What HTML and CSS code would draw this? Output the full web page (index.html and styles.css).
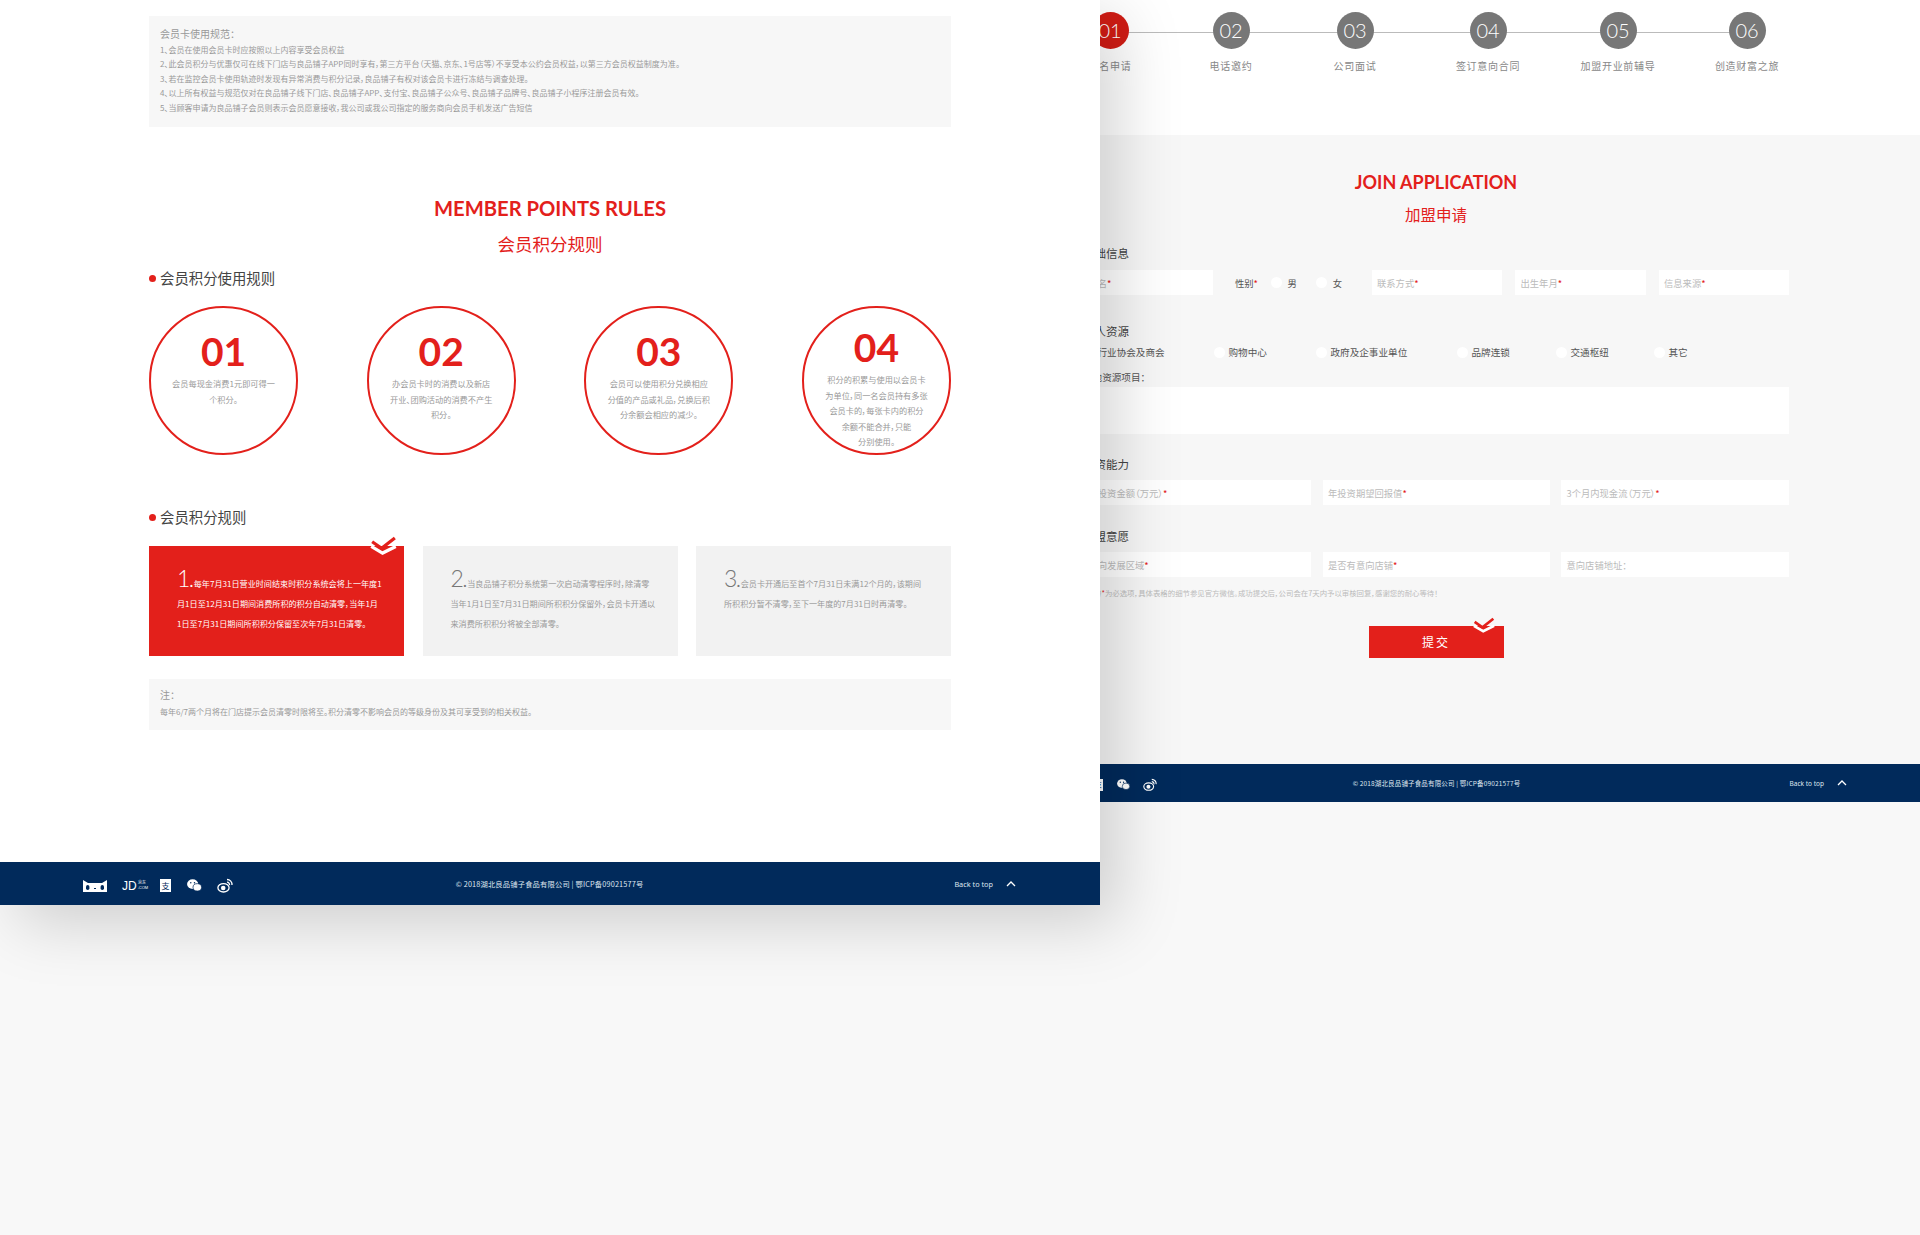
FILE: index.html
```html
<!DOCTYPE html>
<html lang="zh-CN">
<head>
<meta charset="utf-8">
<title>Member points rules and join application</title>
<link rel="stylesheet" href="styles.css">
</head>
<body>
<div class="canvas">

  <section class="win win-right">
    <div class="stepper">
      <div class="step step-on"><span class="step-dot">01</span><span class="step-label">报名申请</span></div>
      <div class="step"><span class="step-dot">02</span><span class="step-label">电话邀约</span></div>
      <div class="step"><span class="step-dot">03</span><span class="step-label">公司面试</span></div>
      <div class="step"><span class="step-dot">04</span><span class="step-label">签订意向合同</span></div>
      <div class="step"><span class="step-dot">05</span><span class="step-label">加盟开业前辅导</span></div>
      <div class="step"><span class="step-dot">06</span><span class="step-label">创造财富之旅</span></div>
    </div>
    <div class="apply">
      <h2 class="apply-en">JOIN APPLICATION</h2>
      <p class="apply-cn">加盟申请</p>
      <form class="form">
        <h3 class="form-h form-h1">基础信息</h3>
        <div class="row-basic">
          <div class="field f-name">姓名<i>*</i></div>
          <div class="gender">
            <span class="gender-label">性别<i>*</i></span>
            <span class="radio"></span><span class="gender-opt">男</span>
            <span class="radio radio-2"></span><span class="gender-opt">女</span>
          </div>
          <div class="field f-third">联系方式<i>*</i></div>
          <div class="field f-third">出生年月<i>*</i></div>
          <div class="field f-third">信息来源<i>*</i></div>
        </div>
        <h3 class="form-h form-h2">个人资源</h3>
        <div class="row-res">
          <div class="opt"><span class="radio"></span>行业协会及商会</div>
          <div class="opt"><span class="radio"></span>购物中心</div>
          <div class="opt"><span class="radio"></span>政府及企事业单位</div>
          <div class="opt"><span class="radio"></span>品牌连锁</div>
          <div class="opt"><span class="radio"></span>交通枢纽</div>
          <div class="opt"><span class="radio"></span>其它</div>
        </div>
        <div class="res-label">其他资源项目：</div>
        <div class="area"></div>
        <h3 class="form-h form-h3">投资能力</h3>
        <div class="row-three">
          <div class="field">年投资金额（万元）<i>*</i></div>
          <div class="field">年投资期望回报值<i>*</i></div>
          <div class="field">3个月内现金流（万元）<i>*</i></div>
        </div>
        <h3 class="form-h form-h4">加盟意愿</h3>
        <div class="row-three row-three-b">
          <div class="field">意向发展区域<i>*</i></div>
          <div class="field">是否有意向店铺<i>*</i></div>
          <div class="field">意向店铺地址：</div>
        </div>
        <p class="form-note">注：带<i>*</i>为必选项，具体表格的细节参见官方微信。成功提交后，公司会在7天内予以审核回复，感谢您的耐心等待！</p>
        <div class="submit">提交
          <svg class="tick tick-btn" viewBox="0 0 28 18"><polyline class="tick-w" points="1,10 13,17 27,10"/><polyline class="tick-r" points="2,5 12,12 26,1"/></svg>
        </div>
      </form>
    </div>
    <footer class="foot foot-r">
      <div class="foot-icons">
        <svg class="ic ic-tm" viewBox="0 0 24 12"><path class="ic-f" d="M0 0l5 3h14l5-3v12H0z"/><rect class="ic-b" x="3" y="5" width="3.4" height="5" rx="1.7"/><rect class="ic-b" x="17.6" y="5" width="3.4" height="5" rx="1.7"/></svg>
        <span class="ic-jd">JD<small>京东<br>.COM</small></span>
        <span class="ic-ali">支</span>
        <svg class="ic ic-wx" viewBox="0 0 16 14"><ellipse class="ic-f" cx="6" cy="5.5" rx="6" ry="5.3"/><ellipse class="ic-f ic-line" cx="11" cy="9" rx="4.6" ry="4"/><circle class="ic-b" cx="4" cy="4" r=".8"/><circle class="ic-b" cx="8" cy="4" r=".8"/></svg>
        <svg class="ic ic-wb" viewBox="0 0 16 15"><ellipse class="ic-s" cx="6.5" cy="9.8" rx="5.6" ry="4.2"/><circle class="ic-f" cx="6.2" cy="10" r="2.3"/><path class="ic-s" d="M10 1.5a5 5 0 0 1 5 5.5M10 4.2a2.5 2.5 0 0 1 2.5 3"/></svg>
      </div>
      <div class="foot-copy">© 2018湖北良品铺子食品有限公司 | 鄂ICP备09021577号</div>
      <div class="foot-top"><span>Back to top</span><svg class="top-chev" viewBox="0 0 10 6"><polyline points="1,5 5,1 9,5"/></svg></div>
    </footer>
  </section>

  <section class="win win-left">
    <main class="left-main">
      <div class="panel notice">
        <p class="panel-h">会员卡使用规范：</p>
        <p>1、会员在使用会员卡时应按照以上内容享受会员权益</p>
        <p>2、此会员积分与优惠仅可在线下门店与良品铺子APP同时享有，第三方平台（天猫、京东、1号店等）不享受本公约会员权益，以第三方会员权益制度为准。</p>
        <p>3、若在监控会员卡使用轨迹时发现有异常消费与积分记录，良品铺子有权对该会员卡进行冻结与调查处理。</p>
        <p>4、以上所有权益与规范仅对在良品铺子线下门店、良品铺子APP、支付宝、良品铺子公众号、良品铺子品牌号、良品铺子小程序注册会员有效。</p>
        <p>5、当顾客申请为良品铺子会员则表示会员愿意接收，我公司或我公司指定的服务商向会员手机发送广告短信</p>
      </div>
      <h1 class="title-en">MEMBER POINTS RULES</h1>
      <p class="title-cn">会员积分规则</p>
      <h2 class="sec-h sec-h1">会员积分使用规则</h2>
      <div class="circles">
        <div class="circle"><b>01</b><p>会员每现金消费1元即可得一<br>个积分。</p></div>
        <div class="circle"><b>02</b><p>办会员卡时的消费以及新店<br>开业、团购活动的消费不产生<br>积分。</p></div>
        <div class="circle"><b>03</b><p>会员可以使用积分兑换相应<br>分值的产品或礼品，兑换后积<br>分余额会相应的减少。</p></div>
        <div class="circle circle-tall"><b>04</b><p>积分的积累与使用以会员卡<br>为单位，同一名会员持有多张<br>会员卡的，每张卡内的积分<br>余额不能合并，只能<br>分别使用。</p></div>
      </div>
      <h2 class="sec-h sec-h2">会员积分规则</h2>
      <div class="cards">
        <div class="card card-on">
          <svg class="tick tick-card" viewBox="0 0 28 18"><polyline class="tick-w" points="1,10 13,17 27,10"/><polyline class="tick-r" points="2,5 12,12 26,1"/></svg>
          <span class="card-n">1.</span>每年7月31日营业时间结束时积分系统会将上一年度1<br>月1日至12月31日期间消费所积的积分自动清零，当年1月<br>1日至7月31日期间所积积分保留至次年7月31日清零。
        </div>
        <div class="card"><span class="card-n">2.</span>当良品铺子积分系统第一次启动清零程序时，除清零<br>当年1月1日至7月31日期间所积积分保留外，会员卡开通以<br>来消费所积积分将被全部清零。</div>
        <div class="card"><span class="card-n">3.</span>会员卡开通后至首个7月31日未满12个月的，该期间<br>所积积分暂不清零，至下一年度的7月31日时再清零。</div>
      </div>
      <div class="panel note">
        <p class="panel-h">注：</p>
        <p>每年6/7两个月将在门店提示会员清零时限将至。积分清零不影响会员的等级身份及其可享受到的相关权益。</p>
      </div>
    </main>
    <footer class="foot foot-l">
      <div class="foot-icons">
        <svg class="ic ic-tm" viewBox="0 0 24 12"><path class="ic-f" d="M0 0l5 3h14l5-3v12H0z"/><rect class="ic-b" x="3" y="5" width="3.4" height="5" rx="1.7"/><rect class="ic-b" x="17.6" y="5" width="3.4" height="5" rx="1.7"/><rect class="ic-b" x="11" y="8" width="2" height="1"/></svg>
        <span class="ic-jd">JD<small>京东<br>.COM</small></span>
        <span class="ic-ali">支</span>
        <svg class="ic ic-wx" viewBox="0 0 16 14"><ellipse class="ic-f" cx="6" cy="5.5" rx="6" ry="5.3"/><ellipse class="ic-f ic-line" cx="11" cy="9" rx="4.6" ry="4"/><circle class="ic-b" cx="4" cy="4" r=".8"/><circle class="ic-b" cx="8" cy="4" r=".8"/></svg>
        <svg class="ic ic-wb" viewBox="0 0 16 15"><ellipse class="ic-s" cx="6.5" cy="9.8" rx="5.6" ry="4.2"/><circle class="ic-f" cx="6.2" cy="10" r="2.3"/><path class="ic-s" d="M10 1.5a5 5 0 0 1 5 5.5M10 4.2a2.5 2.5 0 0 1 2.5 3"/></svg>
      </div>
      <div class="foot-copy">© 2018湖北良品铺子食品有限公司 | 鄂ICP备09021577号</div>
      <div class="foot-top"><span>Back to top</span><svg class="top-chev" viewBox="0 0 10 6"><polyline points="1,5 5,1 9,5"/></svg></div>
    </footer>
  </section>

</div>
</body>
</html>
```
FILE: styles.css
```css
* { box-sizing: border-box; }
html, body { margin: 0; padding: 0; }
body { font-family: "Noto Sans CJK SC", "Noto Sans", sans-serif; font-feature-settings: "palt"; }
h1, h2, h3, p { margin: 0; font-weight: 400; }
i { font-style: normal; color: #e3201b; }

.canvas { position: relative; width: 1920px; height: 1235px; overflow: hidden; background: #f8f8f8; }
.win { position: absolute; top: 0; display: flex; flex-direction: column; }
.win-left { left: 0; width: 1100px; height: 905px; background: #fff; z-index: 2; box-shadow: 18px 18px 60px rgba(0,0,0,.17); }
.win-right { left: 1000px; width: 920px; height: 802px; background: #fff; z-index: 1; }

/* left window */
.left-main { flex: 1; padding: 16px 149px 0; }
.panel { background: #f7f7f7; padding-left: 11px; color: #999; font-size: 8px; }
.notice { height: 111px; padding-top: 9px; line-height: 14.4px; }
.panel-h { font-size: 10px; line-height: 18px; color: #999; }
.title-en { margin-top: 69px; font: 700 20.2px/24px Lato, sans-serif; color: #e3201b; text-align: center; }
.title-cn { margin-top: 12px; font-size: 17.5px; line-height: 24px; color: #e3201b; text-align: center; }
.sec-h { position: relative; padding-left: 11px; font-size: 14.4px; line-height: 20px; color: #444; }
.sec-h::before { content: ""; position: absolute; left: 0; top: 7px; width: 7px; height: 7px; border-radius: 50%; background: #e3201b; }
.sec-h1 { margin-top: 12px; }
.sec-h2 { margin-top: 52px; }

.circles { margin-top: 18px; display: flex; justify-content: space-between; }
.circle { width: 149px; height: 149px; border: 2px solid #e3201b; border-radius: 50%; padding-top: 21px; text-align: center; overflow: hidden; }
.circle-tall { padding-top: 17px; }
.circle b { display: block; font: 700 39px/44px Lato, sans-serif; color: #e3201b; }
.circle p { margin-top: 3px; font-size: 8.2px; line-height: 15.5px; color: #999; }

.cards { margin-top: 19px; display: grid; grid-template-columns: 255px 255px 255px; justify-content: space-between; }
.card { position: relative; height: 110px; padding: 28px 10px 0 28px; background: #f2f2f2; color: #999; font-size: 8.1px; line-height: 20px; white-space: nowrap; }
.card-on { background: #e3201b; color: #fff; }
.card-n { font: 300 23px/0 Lato, sans-serif; letter-spacing: -1.5px; margin-right: 1px; color: #777; }
.card-on .card-n { color: #fff; }

.note { margin-top: 23px; height: 51px; padding-top: 7px; line-height: 16px; }

.tick { position: absolute; overflow: visible; }
.tick polyline { fill: none; stroke-width: 3.4; }
.tick-r { stroke: #e3201b; }
.tick-w { stroke: #fff; }
.tick-card { right: 7px; top: -9px; width: 27px; height: 17px; }
.tick-btn { right: 9px; top: -8px; width: 22px; height: 14px; }

/* footers */
.foot { display: grid; grid-template-columns: 1fr auto 1fr; align-items: center; background: #012a5b; color: #dfe6ef; }
.foot-l { --s: 1; height: 43px; padding: 0 84px 0 83px; font-size: 7.3px; }
.foot-r { --s: .877; height: 38px; padding: 0 73px 0 26px; font-size: 6.5px; }
.foot-icons { display: flex; align-items: center; gap: calc(15px * var(--s)); margin-top: 4px; }
.ic { display: block; flex: none; }
.ic-f { fill: #fff; }
.ic-b { fill: #012a5b; }
.ic-line { stroke: #012a5b; stroke-width: .8; }
.ic-s { fill: none; stroke: #fff; stroke-width: 1.3; }
.ic-tm { width: calc(24px * var(--s)); height: calc(12px * var(--s)); }
.ic-wx { width: calc(15px * var(--s)); height: calc(13px * var(--s)); margin-left: calc(1px * var(--s)); }
.ic-wb { width: calc(16px * var(--s)); height: calc(15px * var(--s)); }
.ic-jd { display: flex; align-items: center; width: calc(23px * var(--s)); font: 400 calc(12px * var(--s))/1 "Liberation Sans", sans-serif; color: #fff; }
.ic-jd small { margin-left: 1px; font-size: calc(4px * var(--s)); line-height: 1.1; }
.ic-ali { display: block; width: calc(11px * var(--s)); height: calc(13px * var(--s)); background: #fff; color: #012a5b; font-size: calc(8px * var(--s)); line-height: calc(13px * var(--s)); text-align: center; }
.foot-copy { white-space: nowrap; letter-spacing: .15px; }
.foot-top { display: flex; justify-content: flex-end; align-items: center; font-family: "Noto Sans", sans-serif; }
.foot-l .foot-top span { margin-right: 13px; }
.foot-r .foot-top span { margin-right: 13px; }
.top-chev { width: 10px; height: 6px; }
.top-chev polyline { fill: none; stroke: #fff; stroke-width: 1.3; }

/* right window */
.stepper { position: relative; height: 135px; padding: 12px 0 0 50px; display: grid; grid-template-columns: 120px 122px 126px 140px 120px 138px; align-content: start; background: #fff; }
.stepper::before { content: ""; position: absolute; left: 110px; top: 32px; width: 637px; height: 1px; background: #bbb; }
.step { position: relative; display: flex; flex-direction: column; align-items: center; }
.step-dot { width: 37px; height: 37px; border-radius: 50%; background: #777; color: #fff; font: 300 20px/37px Lato, sans-serif; text-align: center; }
.step-on .step-dot { background: #d01c14; }
.step-label { margin-top: 9px; font-size: 10px; line-height: 16px; letter-spacing: .7px; color: #888; white-space: nowrap; }

.apply { flex: 1; padding-top: 35px; background: #f7f7f7; }
.apply-en { margin-right: 48px; font: 700 18px/24px Lato, sans-serif; color: #e3201b; text-align: center; }
.apply-cn { margin: 8px 48px 0 0; font-size: 15.5px; line-height: 24px; color: #e3201b; text-align: center; }
.form { width: 706px; margin: 0 0 0 83px; }
.form-h { font-size: 11.5px; line-height: 18px; color: #444; }
.form-h1 { margin-top: 18px; }
.form-h2 { margin-top: 27px; }
.form-h3 { margin-top: 21px; }
.form-h4 { margin-top: 22px; }

.field { height: 25px; padding-left: 5.5px; background: #fff; font-size: 9.3px; line-height: 26px; color: #bbb; white-space: nowrap; }
.row-basic { margin-top: 8px; display: flex; }
.f-name { width: 130px; }
.f-third { width: 130.5px; margin-left: 13px; }
.gender { flex: 1; margin-left: 22px; display: flex; align-items: center; font-size: 9.3px; color: #555; }
.gender-label { width: 35.5px; }
.gender-opt { margin-left: 6px; }
.radio { flex: none; display: inline-block; width: 11px; height: 11px; border-radius: 50%; background: #fff; }
.radio-2 { margin-left: 19px; }

.row-res { margin-top: 5px; display: grid; grid-template-columns: 131px 102px 141px 99px 98px 1fr; }
.opt { display: flex; align-items: center; gap: 3.5px; font-size: 9.6px; line-height: 14px; color: #555; white-space: nowrap; }
.res-label { margin-top: 11px; font-size: 9.6px; line-height: 14px; color: #555; }
.area { margin-top: 3px; height: 47px; background: #fff; }

.row-three { margin-top: 7px; display: grid; grid-template-columns: 228px 227px 228px; justify-content: space-between; }
.row-three-b { margin-top: 7px; }

.form-note { margin-top: 10px; font-size: 7.4px; line-height: 12px; color: #bbb; white-space: nowrap; }
.submit { position: relative; margin: 27px auto 0; width: 135px; height: 32px; background: #e3201b; color: #fff; font-size: 12px; line-height: 32px; letter-spacing: 2px; text-align: center; }
```
